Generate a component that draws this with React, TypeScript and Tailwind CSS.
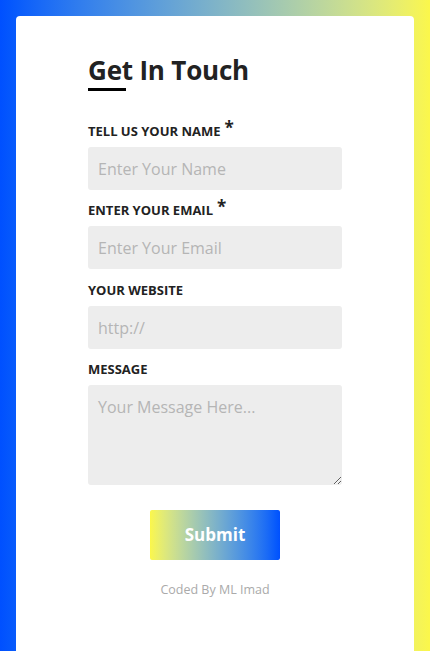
import React from 'react';

const Label: React.FC<{ text: string; required?: boolean }> = ({ text, required }) => (
  <label className="flex items-start h-[20px] text-[13px] font-bold uppercase text-[#222] leading-[20px]">
    {text}
    {required && <span className="ml-[4px] text-[17px] leading-[14px]">*</span>}
  </label>
);

const fieldClass =
  'mt-[6px] h-[43px] w-full rounded-[3px] bg-[#ededed] px-[10px] text-[16px] text-[#333] placeholder-[#b5b5b5] outline-none';

export default function App() {
  return (
    <div
      className="min-h-[651px] w-full bg-gradient-to-r from-[#0050ff] to-[#fbf74a] px-[16px] pt-[16px] overflow-hidden"
      style={{ fontFamily: '"Open Sans", "Liberation Sans", sans-serif' }}
    >
      <div className="bg-white rounded-t-[4px] h-[660px] px-[72px] pt-[40px]">
        <h1 className="text-[26px] font-bold text-[#222] leading-[28px] tracking-[-0.2px]">Get In Touch</h1>
        <div className="mt-[4px] w-[38px] h-[3px] bg-black" />

        <form className="mt-[30px] flex flex-col" onSubmit={(e) => e.preventDefault()}>
          <Label text="Tell us your name" required />
          <input className={fieldClass} placeholder="Enter Your Name" />
          <div className="mt-[10px]">
            <Label text="Enter your email" required />
          </div>
          <input className={fieldClass} placeholder="Enter Your Email" />
          <div className="mt-[11px]">
            <Label text="Your website" />
          </div>
          <input className={fieldClass} placeholder="http://" />
          <div className="mt-[10px]">
            <Label text="Message" />
          </div>
          <textarea
            className="mt-[6px] h-[100px] w-full rounded-[3px] bg-[#ededed] px-[10px] py-[10px] text-[16px] leading-[24px] text-[#333] placeholder-[#b5b5b5] outline-none"
            placeholder="Your Message Here..."
          />
          <button
            type="submit"
            className="mt-[25px] mx-auto w-[130px] h-[50px] rounded-[2px] bg-gradient-to-r from-[#fbf74a] to-[#0050ff] text-white text-[17px] font-bold"
          >
            Submit
          </button>
          <p className="mt-[21px] text-center text-[12.5px] leading-[18px] text-[#aaa]">Coded By ML Imad</p>
        </form>
      </div>
    </div>
  );
}
